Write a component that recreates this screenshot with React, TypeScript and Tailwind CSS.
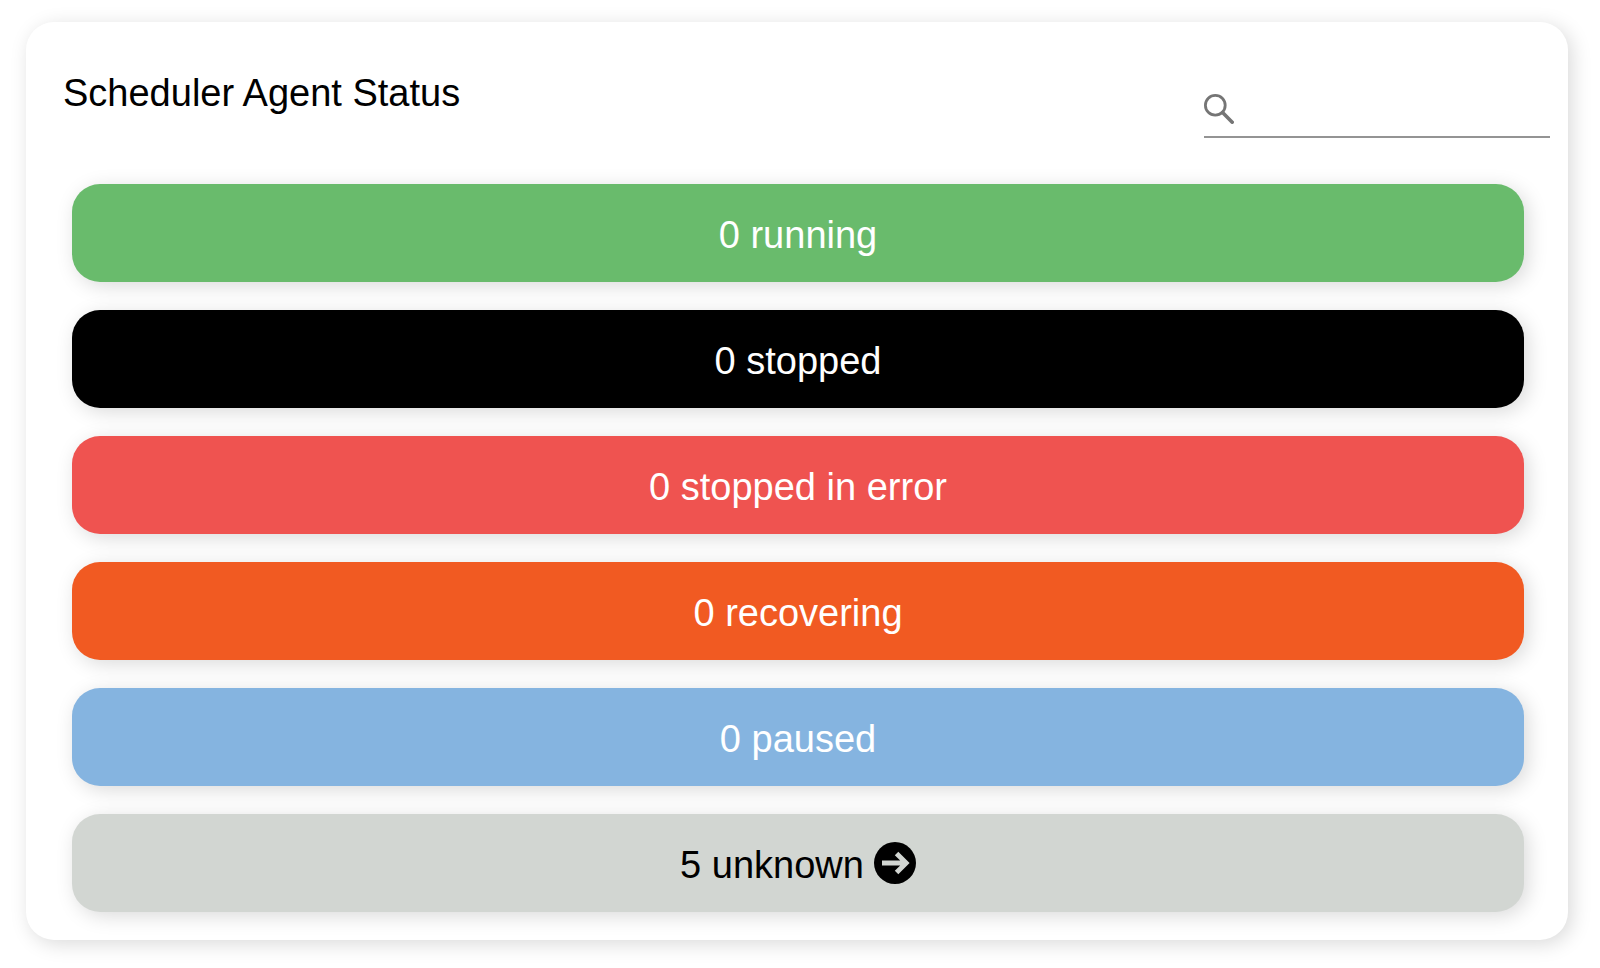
import { useState } from "react";

type Status = { label: string; count: number; tone: string };

const statuses: Status[] = [
  { label: "running", count: 0, tone: "bg-[#69bb6c] text-white" },
  { label: "stopped", count: 0, tone: "bg-black text-white" },
  { label: "stopped in error", count: 0, tone: "bg-[#ef5350] text-white" },
  { label: "recovering", count: 0, tone: "bg-[#f15a22] text-white" },
  { label: "paused", count: 0, tone: "bg-[#85b4e0] text-white" },
  { label: "unknown", count: 5, tone: "bg-[#d2d6d2] text-black" },
];

function SearchIcon() {
  return (
    <svg className="size-[30px] shrink-0" viewBox="0 0 30 30" fill="none" stroke="#757575" aria-hidden="true">
      <circle cx="11.3" cy="11.3" r="9.9" strokeWidth="2.8" />
      <path d="M18.6 18.6 L28.2 28.2" strokeWidth="3.6" strokeLinecap="round" />
    </svg>
  );
}

function ArrowIcon() {
  return (
    <svg className="size-[42px] shrink-0" viewBox="0 0 42 42" aria-hidden="true">
      <circle cx="21" cy="21" r="21" fill="#000" />
      <path
        d="M8 18.5 H26.2 L20.8 13.2 L24.3 9.7 L35.6 21 L24.3 32.3 L20.8 28.8 L26.2 23.5 H8 Z"
        fill="#d2d6d2"
      />
    </svg>
  );
}

export default function App() {
  const [query, setQuery] = useState("");
  const shown = statuses.filter((s) => s.label.includes(query.trim().toLowerCase()));

  return (
    <main className="bg-white pt-[22px] pr-8 pb-7 pl-[26px] font-['Liberation_Sans',Arial,sans-serif] text-[38px] leading-[44px]">
      <section className="rounded-[28px] bg-white pb-7 shadow-[4px_4px_20px_rgba(0,0,0,0.15)]">
        <header className="flex items-start justify-between pt-[49px] pr-[18px] pb-[46px] pl-[37px]">
          <h1 className="text-black">Scheduler Agent Status</h1>
          <label className="mt-[23px] flex h-11 w-[346px] items-start gap-2 border-b-2 border-[#949494]">
            <SearchIcon />
            <input
              type="text"
              aria-label="Search agents"
              value={query}
              onChange={(e) => setQuery(e.target.value)}
              className="h-[30px] min-w-0 flex-1 bg-transparent text-[28px] leading-[30px] outline-none"
            />
          </label>
        </header>
        <ul className="flex flex-col gap-7 pr-11 pl-[46px]">
          {shown.map((s) => (
            <li key={s.label}>
              <button
                type="button"
                className={`flex h-[98px] w-full items-center justify-center gap-2.5 rounded-[28px] shadow-[4px_4px_20px_rgba(0,0,0,0.15)] ${s.tone}`}
              >
                <span className="pt-1">
                  {s.count} {s.label}
                </span>
                {s.count > 0 && <ArrowIcon />}
              </button>
            </li>
          ))}
        </ul>
      </section>
    </main>
  );
}
